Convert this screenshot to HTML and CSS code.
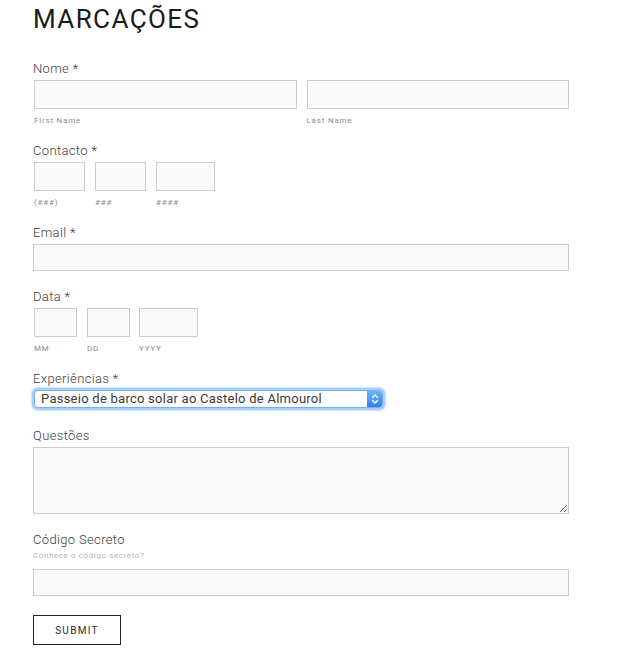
FILE: index.html
```html
<!DOCTYPE html>
<html lang="pt">
<head>
<meta charset="utf-8">
<title>Marcações</title>
<link rel="stylesheet" href="styles.css">
</head>
<body>
<form class="form">
  <h1 class="title">MARCAÇÕES</h1>

  <div class="field field-name">
    <label class="label">Nome *</label>
    <div class="row row-name">
      <div class="part"><input class="input input-tall" type="text"><span class="sub">First Name</span></div>
      <div class="part"><input class="input input-tall" type="text"><span class="sub">Last Name</span></div>
    </div>
  </div>

  <div class="field">
    <label class="label">Contacto *</label>
    <div class="row row-split">
      <div class="part"><input class="input input-tall w51" type="text"><span class="sub">(###)</span></div>
      <div class="part"><input class="input input-tall w51" type="text"><span class="sub">###</span></div>
      <div class="part"><input class="input input-tall w59" type="text"><span class="sub">####</span></div>
    </div>
  </div>

  <div class="field field-plain">
    <label class="label">Email *</label>
    <input class="input input-full" type="text">
  </div>

  <div class="field">
    <label class="label">Data *</label>
    <div class="row row-date">
      <div class="part"><input class="input input-tall w43" type="text"><span class="sub">MM</span></div>
      <div class="part"><input class="input input-tall w43" type="text"><span class="sub">DD</span></div>
      <div class="part"><input class="input input-tall w59" type="text"><span class="sub">YYYY</span></div>
    </div>
  </div>

  <div class="field field-select">
    <label class="label">Experiências *</label>
    <div class="select">
      <span class="select-text">Passeio de barco solar ao Castelo de Almourol</span>
      <span class="select-btn">
        <svg width="8" height="12" viewBox="0 0 8 12"><path d="M1.5 4.5 L4 2 L6.5 4.5 M1.5 7.5 L4 10 L6.5 7.5" fill="none" stroke="#fff" stroke-width="1.4" stroke-linecap="round" stroke-linejoin="round"/></svg>
      </span>
    </div>
  </div>

  <div class="field field-plain">
    <label class="label">Questões</label>
    <textarea class="input textarea"></textarea>
  </div>

  <div class="field field-secret">
    <label class="label">Código Secreto</label>
    <span class="hint">Conhece o código secreto?</span>
    <input class="input input-full" type="text">
  </div>

  <button class="submit" type="button">SUBMIT</button>
</form>
</body>
</html>
```

FILE: styles.css
```css
* { box-sizing: border-box; }

body {
  margin: 0;
  background: #fff;
  font-family: Roboto, "Liberation Sans", Arial, sans-serif;
  color: #555;
}

.form {
  width: 570px;
  padding: 4px 0 0 33px;
  display: flex;
  flex-direction: column;
  align-items: flex-start;
}

.title {
  margin: 0 0 27px 0;
  font-size: 26px;
  line-height: 30px;
  font-weight: 400;
  letter-spacing: 1.4px;
  color: #1a1a1a;
}

.field {
  display: flex;
  flex-direction: column;
  align-items: flex-start;
  width: 536px;
  margin-bottom: 17px;
}

.field-plain { margin-bottom: 18px; }

.label {
  display: block;
  font-size: 13px;
  line-height: 16px;
  font-weight: 300;
  letter-spacing: 0.35px;
  color: #3c3c3c;
  margin-bottom: 3px;
}

.row {
  display: flex;
  gap: 10px;
  padding-left: 1px;
}

.row-name { width: 536px; }
.row-name .part { flex: 1; }

.row-date .part:last-child { margin-left: -1px; }

.part {
  display: flex;
  flex-direction: column;
  align-items: flex-start;
}

.input {
  display: block;
  margin: 0;
  border: 1px solid #cccccc;
  background: #fafafa;
  border-radius: 0;
  font: inherit;
  outline: none;
}

.input-tall { height: 29px; width: 100%; }
.w51 { width: 51px; }
.w43 { width: 43px; }
.w59 { width: 59px; }

.input-full { width: 536px; height: 27px; }

.sub {
  display: block;
  margin-top: 7px;
  font-size: 8px;
  line-height: 10px;
  letter-spacing: 0.8px;
  color: #8c8c8c;
}

.field-select { margin-bottom: 20px; }

.select {
  display: flex;
  align-items: stretch;
  width: 349px;
  height: 18px;
  margin-left: 1px;
  border: 1px solid #79aef2;
  border-radius: 4px;
  background: #fff;
  box-shadow: 0 0 0 2px #a9cdf8, 0 0 2px 3px rgba(150, 190, 245, 0.5);
}

.select-text {
  flex: 1;
  padding-left: 6px;
  font-size: 13px;
  line-height: 16px;
  letter-spacing: 0.25px;
  color: #3a3a3a;
  white-space: nowrap;
}

.select-btn {
  width: 15px;
  display: flex;
  align-items: center;
  justify-content: center;
  border-radius: 0 3px 3px 0;
  background: linear-gradient(#6fb0fa, #2f83f2);
}

.textarea {
  width: 536px;
  height: 67px;
  resize: both;
}

.hint {
  display: block;
  font-size: 8px;
  line-height: 10px;
  letter-spacing: 0.6px;
  color: #b5b5b5;
  margin-bottom: 8px;
}

.field-secret { margin-bottom: 19px; }

.submit {
  width: 88px;
  height: 30px;
  margin: 0;
  padding: 0;
  border: 1px solid #222;
  background: #fff;
  font-family: Roboto, "Liberation Sans", Arial, sans-serif;
  font-size: 10px;
  font-weight: 400;
  letter-spacing: 1.3px;
  color: #2a2a2a;
}
```
